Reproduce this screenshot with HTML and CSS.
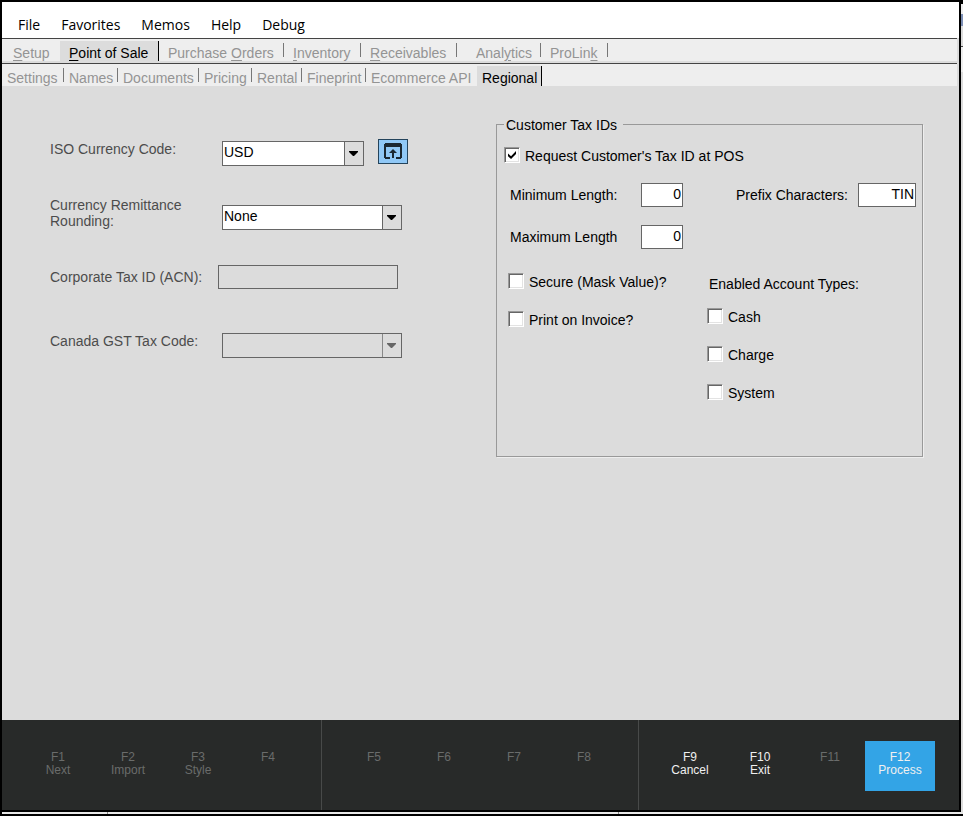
FILE: index.html
```html
<!DOCTYPE html>
<html lang="en">
<head>
<meta charset="utf-8">
<title>Point of Sale - Regional</title>
<link rel="stylesheet" href="styles.css">
</head>
<body>
<div class="desktop">
  <div class="stage">
    <div class="window">
      <nav class="menu">
        <button type="button">File</button>
        <button type="button">Favorites</button>
        <button type="button">Memos</button>
        <button type="button">Help</button>
        <button type="button">Debug</button>
      </nav>
      <nav class="tabs tabs-main">
        <a class="tab tab-plain" href="#"><u>S</u>etup</a>
        <a class="tab active" href="#"><u>P</u>oint of Sale</a>
        <a class="tab" href="#">Purchase <u>O</u>rders</a>
        <a class="tab" href="#"><u>I</u>nventory</a>
        <a class="tab" href="#"><u>R</u>eceivables</a>
        <a class="tab tab-wide" href="#">Anal<u>y</u>tics</a>
        <a class="tab" href="#">ProLin<u>k</u></a>
      </nav>
      <nav class="tabs tabs-sub">
        <a class="tab" href="#">Settings</a>
        <a class="tab" href="#">Names</a>
        <a class="tab" href="#">Documents</a>
        <a class="tab" href="#">Pricing</a>
        <a class="tab" href="#">Rental</a>
        <a class="tab" href="#">Fineprint</a>
        <a class="tab tab-plain" href="#">Ecommerce API</a>
        <a class="tab active" href="#">Regional</a>
      </nav>

      <main class="page">
        <form class="regional">
          <div class="row">
            <label for="iso">ISO Currency Code:</label>
            <div class="combo combo-short">
              <select id="iso"><option>USD</option></select>
              <svg class="caret" viewBox="0 0 9 5"><path d="M0 0h9v1L5 5H4L0 1z"/></svg>
            </div>
            <button class="open" type="button" aria-label="Open currency list">
              <svg viewBox="0 0 18 16"><path d="M0 1h1V0h16v1h1v14h-1v1h-5v-2h4V4H2v10h4v2H1v-1H0z"/><path d="M9 6l4 4h-3v5H8v-5H5z"/></svg>
            </button>
          </div>
          <div class="row">
            <label for="rounding">Currency Remittance Rounding:</label>
            <div class="combo">
              <select id="rounding"><option>None</option></select>
              <svg class="caret" viewBox="0 0 9 5"><path d="M0 0h9v1L5 5H4L0 1z"/></svg>
            </div>
          </div>
          <div class="row row-text">
            <label for="acn">Corporate Tax ID (ACN):</label>
            <input class="field" id="acn" type="text" disabled>
          </div>
          <div class="row">
            <label for="gst">Canada GST Tax Code:</label>
            <div class="combo disabled">
              <select id="gst" disabled><option></option></select>
              <svg class="caret" viewBox="0 0 9 5"><path d="M0 0h9v1L5 5H4L0 1z"/></svg>
            </div>
          </div>
        </form>

        <fieldset class="tax">
          <legend>Customer Tax IDs</legend>
          <label class="check check-main"><input type="checkbox" checked><span>Request Customer's Tax ID at POS</span></label>
          <div class="lengths">
            <label for="min">Minimum Length:</label>
            <input class="field" id="min" type="text" value="0">
            <label class="prefix" for="prefix">Prefix Characters:</label>
            <input class="field" id="prefix" type="text" value="TIN">
            <label for="max">Maximum Length</label>
            <input class="field" id="max" type="text" value="0">
          </div>
          <div class="options">
            <div>
              <label class="check"><input type="checkbox"><span>Secure (Mask Value)?</span></label>
              <label class="check"><input type="checkbox"><span>Print on Invoice?</span></label>
            </div>
            <div>
              <p>Enabled Account Types:</p>
              <label class="check"><input type="checkbox"><span>Cash</span></label>
              <label class="check"><input type="checkbox"><span>Charge</span></label>
              <label class="check"><input type="checkbox"><span>System</span></label>
            </div>
          </div>
        </fieldset>
      </main>

      <footer class="keys">
        <div class="group">
          <button type="button" disabled><span>F1</span><span>Next</span></button>
          <button type="button" disabled><span>F2</span><span>Import</span></button>
          <button type="button" disabled><span>F3</span><span>Style</span></button>
          <button type="button" disabled><span>F4</span></button>
        </div>
        <div class="group">
          <button type="button" disabled><span>F5</span></button>
          <button type="button" disabled><span>F6</span></button>
          <button type="button" disabled><span>F7</span></button>
          <button type="button" disabled><span>F8</span></button>
        </div>
        <div class="group">
          <button type="button"><span>F9</span><span>Cancel</span></button>
          <button type="button"><span>F10</span><span>Exit</span></button>
          <button type="button" disabled><span>F11</span></button>
          <button class="primary" type="button"><span>F12</span><span>Process</span></button>
        </div>
      </footer>
    </div>
    <div class="edge"></div>
  </div>
  <div class="strip"><span></span><span></span></div>
</div>
</body>
</html>
```
FILE: styles.css
```css
* { box-sizing: border-box; }

body {
  margin: 0;
  background: #000;
  font: 14px/16px "Liberation Sans", Arial, sans-serif;
  color: #000;
}

button, input, select { font: inherit; color: inherit; margin: 0; }

.desktop {
  display: flex;
  flex-direction: column;
  min-height: 100vh;
  padding-bottom: 2px;
}

.stage { flex: 1; display: flex; }

.window {
  flex: 1;
  min-width: 0;
  display: flex;
  flex-direction: column;
  border: 2px solid #000;
  background: #dcdcdc;
}

.edge {
  width: 2px;
  border-top: 4px solid #000;
  background: linear-gradient(#eee 10px, #7d8fb5 10px 22px, #dcdcdc 22px 42px, #444 42px 43px, #eee 43px 68px, #dcdcdc 68px);
}

.strip { display: flex; height: 2px; margin-left: 2px; background: #e8e8e8; }
.strip span { width: 106px; border-right: 1px solid #888; }
.strip span + span { width: 511px; }

.menu {
  display: flex;
  gap: 21px;
  height: 36px;
  padding: 10px 16px 0;
  background: #fff;
  font: 14px/26px "Open Sans", "Noto Sans", sans-serif;
}
.menu button { padding: 0; border: 0; background: none; }

.tabs {
  display: grid;
  margin-right: 2px;
  border-top: 1px solid #444;
  background: #eee;
  color: #949494;
}
.tabs-main {
  grid-template-columns: 58px 99px 125px 77px 96px 84px 67px;
  height: 25px;
  padding-top: 2px;
  border-bottom: 2px solid #dcdcdc;
}
.tabs-sub {
  grid-template-columns: 62px 54px 81px 53px 50px 64px 111px 65px;
  height: 23px;
  padding-top: 2px;
}
.tab {
  padding: 4px 0 0 9px;
  color: inherit;
  white-space: nowrap;
  text-decoration: none;
  background: linear-gradient(#777, #777) right 2px / 1px 14px no-repeat;
}
.tabs-sub .tab { padding-left: 5px; }
.tab.tab-plain { background: none; }
.tabs-main .tab-plain { padding-left: 11px; }
.tabs-main .tab-wide { padding-left: 19px; }
.tabs .active { border-right: 1px solid #000; background: #dcdcdc; color: #000; }
.tab u { text-underline-offset: 2px; }

.page {
  flex: 1;
  display: grid;
  grid-template-columns: 446px minmax(0, 427px);
  align-items: start;
  padding: 31px 36px 31px 48px;
}

.row {
  display: grid;
  grid-template-columns: 172px auto auto;
  justify-content: start;
  align-items: center;
  height: 64px;
  color: #4c4c4c;
}
.row-text { grid-template-columns: 168px 180px; }
.row label { padding-right: 8px; }
.row-text label { padding-right: 0; }

.combo {
  display: grid;
  grid-template-columns: 1fr 19px;
  width: 180px;
  height: 25px;
  margin-top: 8px;
  border: 1px solid #666;
  background: #fff;
  color: #000;
}
.combo-short { width: 142px; }
.combo select {
  grid-area: 1 / 1 / 2 / 3;
  appearance: none;
  width: 100%;
  padding: 0 20px 2px 1px;
  border: 0;
  border-radius: 0;
  background: linear-gradient(#dcdcdc, #dcdcdc) right / 18px 100% no-repeat, linear-gradient(#666, #666) right / 19px 100% no-repeat;
}
.caret {
  grid-area: 1 / 2;
  z-index: 1;
  place-self: center;
  width: 9px;
  height: 5px;
  pointer-events: none;
}
.combo.disabled { background: #dcdcdc; }
.disabled .caret { fill: #666; }

.open {
  display: grid;
  place-items: center;
  width: 30px;
  height: 25px;
  margin: 4px 0 0 14px;
  padding: 0;
  border: 1px solid #24445c;
  background: #90c8f6;
}
.open svg { width: 18px; height: 16px; fill: #1b2832; }

.field {
  width: 100%;
  height: 24px;
  padding: 0 1px 2px;
  border: 1px solid #666;
  border-radius: 0;
  background: #fff;
}
.field:disabled { background: #dcdcdc; }

.tax {
  min-width: 0;
  min-height: 340px;
  margin: 0;
  padding: 0 6px 0 7px;
  border: 1px solid #999;
  box-shadow: 1px 1px 0 #eee;
}
.tax legend {
  padding: 2px 6px 0 2px;
  line-height: 12px;
  background: #dcdcdc;
}

.check { display: flex; align-items: center; height: 38px; }
.check input {
  appearance: none;
  display: grid;
  place-items: center;
  width: 16px;
  height: 16px;
  margin: 0 5px 2px 0;
  border: 1px solid;
  border-color: #999 #fff #fff #999;
  background: #fff;
  box-shadow: inset 1px 1px 0 #666, inset -1px -1px 0 #e3e3e3;
}
.check input:checked::before {
  content: "";
  width: 8px;
  height: 8px;
  background: #000;
  clip-path: polygon(0 30%, 38% 65%, 100% 0, 100% 38%, 38% 100%, 0 65%);
}
.check-main { height: 43px; padding-top: 7px; }

.lengths {
  display: grid;
  grid-template-columns: 131px 42px 175px 58px;
  grid-auto-rows: 42px;
  align-items: center;
  padding-left: 6px;
}
.lengths .field { text-align: right; }
.lengths .prefix { justify-self: end; padding-right: 10px; }
.lengths label { white-space: nowrap; }

.options {
  display: grid;
  grid-template-columns: 199px 1fr;
  padding: 5px 0 0 4px;
}
.options p { margin: 13px 0 6px 2px; }

.keys { display: flex; height: 90px; background: #282a29; }
.group { display: flex; padding: 21px 19px 0 17px; border-right: 1px solid #484a49; }
.group:first-child { padding: 21px 18px 0 21px; }
.group:last-child { padding-left: 16px; border-right: 0; }
.group button {
  display: grid;
  align-content: start;
  justify-items: center;
  width: 70px;
  height: 50px;
  padding: 10px 0 0;
  border: 0;
  background: none;
  color: #f0f0f0;
  font-size: 12px;
  line-height: 13px;
}
.group button:disabled { color: #6a6c6b; }
.group .primary { background: #33a4e6; }
```
